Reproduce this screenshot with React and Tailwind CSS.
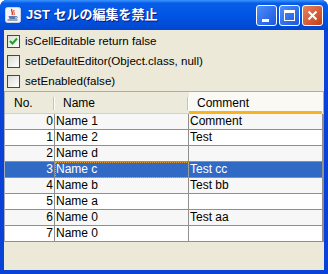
import React from "react";

const rows = [
  ["0", "Name 1", "Comment"],
  ["1", "Name 2", "Test"],
  ["2", "Name d", ""],
  ["3", "Name c", "Test cc"],
  ["4", "Name b", "Test bb"],
  ["5", "Name a", ""],
  ["6", "Name 0", "Test aa"],
  ["7", "Name 0", ""],
];

function JavaIcon() {
  return (
    <svg width="16" height="16" viewBox="0 0 16 16">
      <rect x="0.5" y="0.5" width="15" height="15" rx="2" fill="#f4f4f4" stroke="#c8d4ea" />
      <path d="M7 2 C5 4 9 5 7 8" stroke="#e0301e" strokeWidth="1.4" fill="none" />
      <path d="M9 3 C8 5 10 6 9 8" stroke="#e0301e" strokeWidth="1" fill="none" />
      <path d="M3.5 9 L11 9 L10 12 L4.5 12 Z" fill="#5a7ab0" />
      <path d="M11 9.5 C13 9.5 13 11.5 10.5 11.5" stroke="#5a7ab0" strokeWidth="1" fill="none" />
      <path d="M2.5 13 L12.5 13" stroke="#3a5a90" strokeWidth="1" />
    </svg>
  );
}

function CheckBox({ checked }) {
  return (
    <div className="w-[13px] h-[13px] border border-[#1c5180] bg-gradient-to-br from-[#dcdcd7] to-[#ffffff] flex items-center justify-center shrink-0">
      {checked && (
        <svg width="9" height="9" viewBox="0 0 9 9">
          <path d="M1 4 L3.5 6.5 L8 1.5" stroke="#21a121" strokeWidth="2" fill="none" />
        </svg>
      )}
    </div>
  );
}

export default function App() {
  return (
    <div
      className="w-[328px] h-[274px] bg-white text-[12px] text-black"
      style={{ fontFamily: '"Liberation Sans", "Noto Sans CJK JP", sans-serif' }}
    >
      <div className="w-[328px] h-[274px] flex flex-col rounded-t-[7px] overflow-hidden bg-[#0842d6]">
        {/* Title bar */}
        <div className="h-[30px] shrink-0 flex items-center bg-gradient-to-b from-[#0a5ee8] via-[#0055e5] to-[#0047d0] relative">
          <div className="absolute top-0 left-0 right-0 h-[3px] bg-gradient-to-b from-[#3d95ff] to-[#0a60ea]" />
          <div className="ml-[5px] relative">
            <JavaIcon />
          </div>
          <div
            className="ml-[5px] text-white font-bold text-[13px] relative"
            style={{ textShadow: "1px 1px 0 #0a1883" }}
          >
            JST セルの編集を禁止
          </div>
          <div className="ml-auto mr-[5px] flex gap-[2px] relative">
            <div className="w-[21px] h-[21px] rounded-[3px] border border-white bg-gradient-to-br from-[#4f8df8] to-[#1a57e0] relative">
              <div className="absolute left-[5px] top-[13px] w-[7px] h-[3px] bg-white" />
            </div>
            <div className="w-[21px] h-[21px] rounded-[3px] border border-white bg-gradient-to-br from-[#4f8df8] to-[#1a57e0] relative">
              <div className="absolute left-[4px] top-[4px] w-[11px] h-[11px] border border-white border-t-[3px]" />
            </div>
            <div className="w-[21px] h-[21px] rounded-[3px] border border-white bg-gradient-to-br from-[#e8805a] to-[#c63d12] flex items-center justify-center">
              <svg width="11" height="11" viewBox="0 0 11 11">
                <path d="M1.5 1.5 L9.5 9.5 M9.5 1.5 L1.5 9.5" stroke="white" strokeWidth="2" />
              </svg>
            </div>
          </div>
        </div>
        {/* Body */}
        <div className="flex-1 mx-[4px] mb-[4px] bg-[#ece9d8] flex flex-col">
          <div className="pt-[1px]">
            {[
              ["isCellEditable return false", true],
              ["setDefaultEditor(Object.class, null)", false],
              ["setEnabled(false)", false],
            ].map(([t, c]) => (
              <div key={t} className="h-[20px] flex items-center pl-[3px] gap-[5px]">
                <CheckBox checked={c} />
                <span className="leading-none text-[11.6px]">{t}</span>
              </div>
            ))}
          </div>
          {/* Table */}
          <div className="border-l border-t border-[#a5acb5] bg-[#ece9d8]">
            {/* Header */}
            <div className="flex h-[22px] border-b border-[#d6d2c2]">
              <div className="w-[50px] relative bg-[#ebeadb] flex items-center pl-[9px]">
                No.
                <div className="absolute right-[1px] top-[5px] h-[13px] w-[1px] bg-[#c7c5b2]" />
                <div className="absolute right-0 top-[5px] h-[13px] w-[1px] bg-white" />
              </div>
              <div className="w-[134px] relative bg-[#ebeadb] flex items-center pl-[8px]">
                Name
                <div className="absolute right-[1px] top-[5px] h-[13px] w-[1px] bg-[#c7c5b2]" />
                <div className="absolute right-0 top-[5px] h-[13px] w-[1px] bg-white" />
              </div>
              <div className="flex-1 relative bg-[#faf9f4] flex items-center pl-[8px] border-r border-[#a5acb5]">
                Comment
                <div className="absolute left-0 right-[1px] bottom-[-1px] h-[3px] bg-[#f8b320] rounded-b-[1px]" />
              </div>
            </div>
            {rows.map((r, i) => {
              const sel = i === 3;
              const bg = sel ? "bg-[#316ac5] text-white" : i % 2 === 0 ? "bg-[#f7f7f7]" : "bg-white";
              return (
                <div key={i} className={`flex h-[16px] ${bg}`}>
                  <div className="w-[50px] border-r border-b border-[#8f8f8f] text-right pr-[1px] leading-[15px]">
                    {r[0]}
                  </div>
                  <div
                    className={`w-[134px] border-r border-b border-[#8f8f8f] pl-[1px] leading-[15px] ${
                      sel ? "outline outline-1 outline-dotted outline-[#e0a040] -outline-offset-1" : ""
                    }`}
                  >
                    {r[1]}
                  </div>
                  <div className="flex-1 border-r-2 border-b border-[#8f8f8f] pl-[1px] leading-[15px]">{r[2]}</div>
                </div>
              );
            })}
          </div>
        </div>
      </div>
    </div>
  );
}
